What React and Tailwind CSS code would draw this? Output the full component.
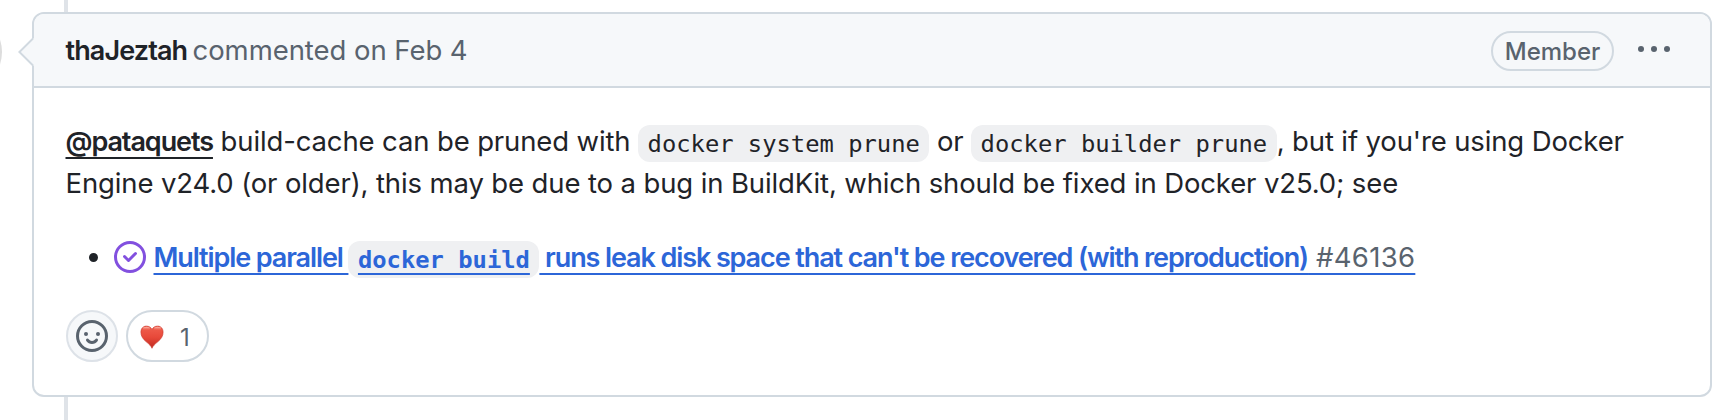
import React from "react";

function Code({ children, link }) {
  return (
    <code
      className={
        "relative top-px rounded-xl bg-[#eff0f2] px-[9.5px] pt-[5px] pb-[4px] font-['DejaVu_Sans_Mono',monospace] text-[23.8px] leading-none tracking-normal " +
        (link ? "font-bold" : "font-normal")
      }
    >
      {link ? (
        <span className="underline decoration-2 underline-offset-[5px] [text-decoration-skip-ink:none]">
          {children}
        </span>
      ) : (
        children
      )}
    </code>
  );
}

function ClosedIssueIcon() {
  return (
    <svg viewBox="0 0 16 16" className="h-8 w-8 shrink-0 fill-[#8250df]">
      <path d="M11.28 6.78a.75.75 0 0 0-1.06-1.06L7.25 8.69 5.78 7.22a.75.75 0 0 0-1.06 1.06l2 2a.75.75 0 0 0 1.06 0l3.5-3.5Z" />
      <path d="M16 8A8 8 0 1 1 0 8a8 8 0 0 1 16 0Zm-1.5 0a6.5 6.5 0 1 0-13 0 6.5 6.5 0 0 0 13 0Z" />
    </svg>
  );
}

function SmileyIcon() {
  return (
    <svg viewBox="0 0 16 16" className="h-8 w-8" fill="none">
      <circle cx="8" cy="8" r="7.25" className="stroke-[#59636e]" strokeWidth="1.5" />
      <circle cx="5" cy="7" r="1" className="fill-[#59636e]" />
      <circle cx="11" cy="7" r="1" className="fill-[#59636e]" />
      <path
        d="M5.75 10.05C6.2 10.7 6.95 11.25 8 11.25S9.8 10.7 10.25 10.05"
        className="stroke-[#59636e]"
        strokeWidth="1.5"
        strokeLinecap="round"
      />
    </svg>
  );
}

function HeartIcon() {
  return (
    <svg viewBox="0 0 24 24" className="h-6 w-6">
      <defs>
        <linearGradient id="heart" x1="0" y1="0" x2="0" y2="1">
          <stop offset="0" stopColor="#f0604f" />
          <stop offset="0.5" stopColor="#e8493a" />
          <stop offset="1" stopColor="#c02a20" />
        </linearGradient>
        <linearGradient id="shine" x1="0" y1="0" x2="0" y2="1">
          <stop offset="0" stopColor="#ffc5b8" stopOpacity="0.95" />
          <stop offset="1" stopColor="#f0604f" stopOpacity="0" />
        </linearGradient>
      </defs>
      <path
        d="M12 23.3C11 20.9 9.2 19.2 6 16.6C2.8 13.9 0.9 11 0.9 7.2C0.9 3.5 3.2 1.1 6.4 1.1C9 1.1 11 2.4 12 4.4C13 2.4 15 1.1 17.6 1.1C20.8 1.1 23.1 3.5 23.1 7.2C23.1 11 21.2 13.9 18 16.6C14.8 19.2 13 20.9 12 23.3Z"
        fill="url(#heart)"
        stroke="#c9362b"
        strokeWidth="0.6"
      />
      <ellipse cx="6.4" cy="3.7" rx="3.6" ry="1.9" fill="url(#shine)" />
      <ellipse cx="17.6" cy="3.7" rx="3.6" ry="1.9" fill="url(#shine)" />
    </svg>
  );
}

function Header() {
  return (
    <header className="flex h-[74px] shrink-0 items-center rounded-t-[10px] border-b-2 border-[#d1d9e0] bg-[#f6f8fa] pl-[31.5px] text-[#59636e]">
      <a className="w-[127px] pt-0.5 text-[27px] font-semibold tracking-[-0.9px] whitespace-nowrap text-[#1f2328]">
        thaJeztah
      </a>
      <span className="pt-0.5 whitespace-nowrap tracking-[-0.05px]">commented on Feb 4</span>
      <span className="mt-0.5 mr-6 ml-auto flex h-10 w-[123px] items-center justify-center rounded-full border-2 border-[#d1d9e0] pt-px text-2xl font-medium">
        Member
      </span>
      <svg viewBox="0 0 32 6" className="mr-10 mb-0.5 h-1.5 w-8 fill-[#59636e]">
        <circle cx="3" cy="3" r="3" />
        <circle cx="16" cy="3" r="3" />
        <circle cx="29" cy="3" r="3" />
      </svg>
    </header>
  );
}

function Message() {
  return (
    <div className="-ml-[0.5px] leading-[42px] tracking-[-0.13px] whitespace-nowrap">
      <p className="h-[42px]">
        <a className="text-[27px] leading-none font-semibold tracking-[-1.08px] underline decoration-2 underline-offset-[6px] [text-decoration-skip-ink:none]">
          @pataquets
        </a>
        {" build-cache can be pruned with "}
        <Code>docker system prune</Code>
        {" or "}
        <Code>docker builder prune</Code>
        {", but if you're using Docker"}
      </p>
      <p className="h-[42px] tracking-[-0.125px]">
        Engine v24.0 (or older), this may be due to a bug in BuildKit, which should be fixed in
        Docker v25.0; see
      </p>
    </div>
  );
}

function LinkText({ children }) {
  return (
    <span className="text-[27px] leading-none font-semibold tracking-[-1.1px] whitespace-pre underline decoration-2 underline-offset-[6px] [text-decoration-skip-ink:none]">
      {children}
    </span>
  );
}

function IssueList() {
  return (
    <ul className="mt-8">
      <li className="flex h-[42px] items-center pl-[23px] leading-[42px]">
        <span className="mr-[16px] h-[9px] w-[9px] shrink-0 rounded-full bg-[#1f2328]" />
        <ClosedIssueIcon />
        <a className="ml-[7.5px] whitespace-pre text-[#2c66d8]">
          <LinkText>{"Multiple parallel "}</LinkText>
          <Code link>docker build</Code>
          <LinkText>{" runs leak disk space that can't be recovered (with reproduction)"}</LinkText>
          <span className="tracking-[0.3px] underline decoration-2 underline-offset-[6px] [text-decoration-skip-ink:none]">
            <span className="text-[#59636e]">{" #46136"}</span>
          </span>
        </a>
      </li>
    </ul>
  );
}

function Reactions() {
  return (
    <div className="mt-8 flex gap-2 text-[#59636e]">
      <button className="flex h-[52px] w-[52px] items-center justify-center rounded-full border-2 border-[#dde2e8] bg-[#f6f8fa]">
        <SmileyIcon />
      </button>
      <button className="flex h-[52px] w-[83px] items-center rounded-full border-2 border-[#d1d9e0] bg-white pt-0.5 pl-3 text-2xl">
        <HeartIcon />
        <span className="pt-0.5 pl-4">1</span>
      </button>
    </div>
  );
}

export default function App() {
  return (
    <div className="relative h-[420px] w-[1734px] overflow-hidden bg-white pt-3 pl-8 font-['Inter','Liberation_Sans',sans-serif] text-[27.5px] text-[#1f2328]">
      <div className="absolute top-0 left-16 h-full w-1 bg-[#dfe3e8]" />
      <div className="absolute top-[12px] -left-[78px] h-20 w-20 rounded-full bg-[#dddddd]" />

      <article className="relative flex h-[385px] w-[1680px] flex-col rounded-xl border-2 border-[#d1d9e0] bg-white">
        <Header />
        <svg viewBox="0 0 16 28" className="absolute top-[24px] -left-4 h-7 w-4">
          <path d="M16 0L2 14L16 28Z" className="fill-[#f6f8fa]" />
          <path d="M15 0.5L1.4 14L15 27.5" fill="none" className="stroke-[#d1d9e0]" strokeWidth="2" />
        </svg>
        <div className="px-8 pt-8">
          <Message />
          <IssueList />
          <Reactions />
        </div>
      </article>
    </div>
  );
}
